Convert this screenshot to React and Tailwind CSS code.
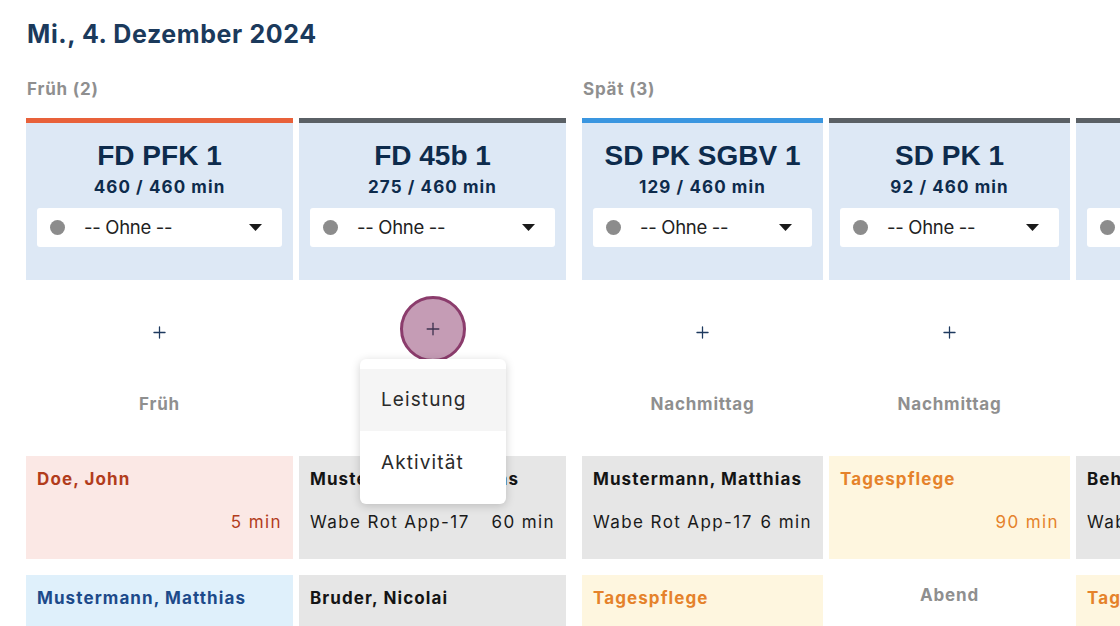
import React from "react";
import { Plus } from "lucide-react";

const body = { fontFamily: "Inter, 'Noto Sans', sans-serif" };
const head = { fontFamily: "'Liberation Sans', Arial, sans-serif" };

const groups = [
  {
    label: "Früh (2)",
    width: "w-[267px]",
    columns: [
      {
        name: "FD PFK 1",
        mins: "460 / 460 min",
        bar: "bg-[#e8613a]",
        shift: "Früh",
        cards: [
          { kind: "pink", title: "Doe, John", right: "5 min" },
          { kind: "blue", title: "Mustermann, Matthias" },
        ],
      },
      {
        name: "FD 45b 1",
        mins: "275 / 460 min",
        bar: "bg-[#5a6065]",
        shift: "Früh",
        active: true,
        cards: [
          { kind: "gray", title: "Mustermann, Matthias", left: "Wabe Rot App-17", right: "60 min" },
          { kind: "gray", title: "Bruder, Nicolai" },
        ],
      },
    ],
  },
  {
    label: "Spät (3)",
    width: "w-[241px]",
    columns: [
      {
        name: "SD PK SGBV 1",
        mins: "129 / 460 min",
        bar: "bg-[#3a96e0]",
        shift: "Nachmittag",
        cards: [
          { kind: "gray", title: "Mustermann, Matthias", left: "Wabe Rot App-17", right: "6 min" },
          { kind: "yellow", title: "Tagespflege" },
        ],
      },
      {
        name: "SD PK 1",
        mins: "92 / 460 min",
        bar: "bg-[#5a6065]",
        shift: "Nachmittag",
        cards: [{ kind: "yellow", title: "Tagespflege", right: "90 min" }],
        after: "Abend",
      },
      {
        name: "SD PK 2",
        mins: "210 / 460 min",
        bar: "bg-[#5a6065]",
        shift: "Nachmittag",
        cards: [
          { kind: "gray", title: "Behrendt, Anna", left: "Wabe Rot App-12", right: "20 min" },
          { kind: "yellow", title: "Tagespflege" },
        ],
      },
    ],
  },
];

const cardStyles = {
  pink: { bg: "bg-[#fbe8e5]", title: "text-[#b23c1c]", text: "text-[#b23c1c]" },
  blue: { bg: "bg-[#dff0fb]", title: "text-[#1c4a8a]", text: "text-[#1c4a8a]" },
  gray: { bg: "bg-[#e6e6e6]", title: "text-[#141414]", text: "text-[#1a1a1a]" },
  yellow: { bg: "bg-[#fef6df]", title: "text-[#e5822b]", text: "text-[#e5822b]" },
};

const Card = ({ card }) => {
  const s = cardStyles[card.kind];
  return (
    <div className={`${s.bg} h-[103px] mb-4 px-[11px] pt-[11px]`}>
      <div className={`${s.title} text-[17px] leading-6 font-bold tracking-[1.1px] whitespace-nowrap`}>
        {card.title}
      </div>
      {(card.left || card.right) && (
        <div className={`${s.text} mt-[19px] flex justify-between gap-[6px] text-[17px] leading-6 tracking-[1.4px] whitespace-nowrap`}>
          <span>{card.left}</span>
          <span>{card.right}</span>
        </div>
      )}
    </div>
  );
};

const Column = ({ col, width }) => (
  <div className={`${width} shrink-0 flex flex-col`}>
    <div className={`${col.bar} h-[5px]`} />
    <div className="bg-[#dde8f5] h-[157px] px-[11px] pt-[17px] flex flex-col items-center">
      <div className="text-[28px] leading-8 font-bold text-[#0d2b4c] whitespace-nowrap" style={head}>
        {col.name}
      </div>
      <div className="mt-[3px] text-[17px] leading-6 font-bold text-[#0d2b4c] tracking-[1.1px] whitespace-nowrap">
        {col.mins}
      </div>
      <div className="mt-[9px] w-full h-[39px] bg-white rounded-[3px] flex items-center pl-[13px] pr-[20px]">
        <span className="w-[15px] h-[15px] rounded-full bg-[#8c8c8c] shrink-0" />
        <span className="ml-[19px] text-[18.5px] tracking-[-0.3px] text-[#222] whitespace-nowrap">-- Ohne --</span>
        <svg className="ml-auto shrink-0" width="13" height="7" viewBox="0 0 13 7">
          <path d="M0 0h13L6.5 7z" fill="#1a1a1a" />
        </svg>
      </div>
    </div>
    <div className="relative h-[104px] flex items-center justify-center">
      {col.active ? (
        <>
          <div className="w-[66px] h-[66px] -mt-[6px] rounded-full bg-[#c59cb5] border-[3px] border-[#8b3c6c] flex items-center justify-center">
            <Plus size={20} strokeWidth={1.6} className="text-[#3f3350]" />
          </div>
          <div className="absolute z-10 top-[79px] left-[61px] w-[146px] h-[145px] bg-white rounded-md shadow-[0_2px_10px_rgba(0,0,0,0.18)] pt-[10px]">
            <div className="h-[62px] bg-[#f5f5f5] flex items-center px-[21px] text-[19px] text-[#2a2a2a] tracking-[1.1px]">
              Leistung
            </div>
            <div className="h-[64px] flex items-center px-[21px] text-[19px] text-[#2a2a2a] tracking-[1.1px]">
              Aktivität
            </div>
          </div>
        </>
      ) : (
        <Plus size={19} strokeWidth={1.6} className="text-[#1e3a5f]" />
      )}
    </div>
    <div className="pt-2 pb-10 text-center text-[17px] leading-6 font-bold text-[#8f8f8f] tracking-[0.8px]">
      {col.shift}
    </div>
    {col.cards.map((c, i) => (
      <Card key={i} card={c} />
    ))}
    {col.after && (
      <div className="pt-2 text-center text-[17px] leading-6 font-bold text-[#8f8f8f] tracking-[0.8px]">
        {col.after}
      </div>
    )}
  </div>
);

export default function App() {
  return (
    <div className="w-[1120px] h-[626px] overflow-hidden bg-white" style={body}>
      <div className="pl-[27px] pt-[18px]">
        <h1 className="text-[25px] leading-8 font-bold text-[#1b3a5c] tracking-[0.6px]">
          Mi., 4. Dezember 2024
        </h1>
      </div>
      <div className="flex gap-4 pl-[26px] mt-[27px]">
        {groups.map((g) => (
          <div key={g.label} className="shrink-0">
            <div className="pl-[1px] text-[17px] leading-6 font-bold text-[#8f8f8f] mb-[17px] tracking-[0.8px]">
              {g.label}
            </div>
            <div className="flex gap-[6px]">
              {g.columns.map((c) => (
                <Column key={c.name} col={c} width={g.width} />
              ))}
            </div>
          </div>
        ))}
      </div>
    </div>
  );
}
